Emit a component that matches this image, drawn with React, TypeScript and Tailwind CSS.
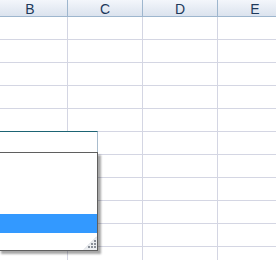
const cols = ['B', 'C', 'D', 'E'];
const rows = Array.from({ length: 11 }, (_, i) => i);

function Grip() {
  return (
    <svg width="14" height="14" viewBox="0 0 14 14" className="absolute right-0 bottom-0">
      <polygon points="14,0 14,14 0,14" fill="#eceef1" />
      <line x1="13.5" y1="1" x2="1" y2="13.5" stroke="#dde1e6" strokeWidth="1" />
      {[
        [11, 4], [8, 7], [11, 7], [5, 10], [8, 10], [11, 10],
      ].map(([x, y], i) => (
        <rect key={i} x={x} y={y} width="2" height="2" fill="#8a9099" />
      ))}
    </svg>
  );
}

export default function App() {
  return (
    <div className="relative w-[276px] h-[260px] overflow-hidden bg-white" style={{ fontFamily: '"Liberation Sans", Arial, sans-serif' }}>
      <div className="flex ml-[-7px] h-[17px] border-b border-[#9eb6ce] bg-gradient-to-b from-[#f3f6fb] to-[#dbe3ee]">
        {cols.map((c) => (
          <div key={c} className="w-[75px] shrink-0 border-r border-[#9eb6ce] flex items-center justify-center pt-[1px] text-[14px] leading-none text-[#1e395b]">
            {c}
          </div>
        ))}
      </div>
      {rows.map((r) => (
        <div key={r} className="flex ml-[-7px] h-[23px] border-b border-[#d4d6e3]">
          {cols.map((c) => (
            <div key={c} className="w-[75px] shrink-0 border-r border-[#d4d6e3]" />
          ))}
        </div>
      ))}

      <div className="absolute left-[-2px] top-[131px] w-[100px] h-[23px] bg-white border-t border-[#1d6474] border-r border-r-[#a9bccd]" />

      <div className="absolute left-[-2px] top-[152px] w-[100px] h-[99px] bg-white border border-[#5f5f5f] shadow-[3px_3px_2px_rgba(0,0,0,0.35)]">
        <div className="mt-[61px] h-[19px] bg-[#3399ff]" />
        <Grip />
      </div>
    </div>
  );
}
